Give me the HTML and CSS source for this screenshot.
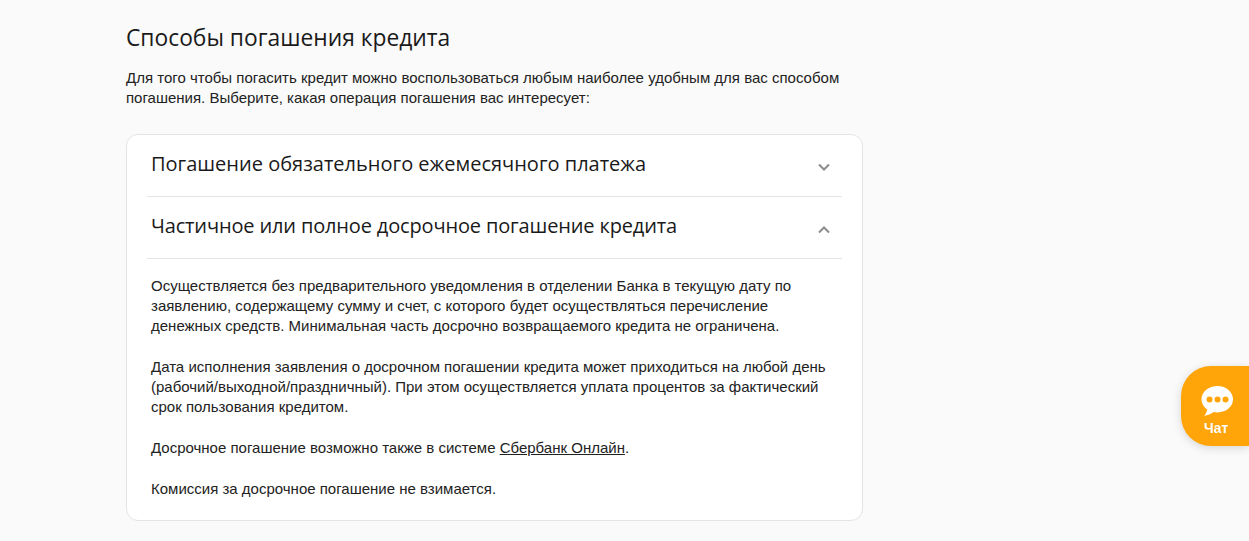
FILE: index.html
```html
<!DOCTYPE html>
<html lang="ru">
<head>
    <meta charset="UTF-8" />
    <title>Способы погашения кредита</title>
    <link rel="stylesheet" href="styles.css">
</head>
<body>
    <main class="content">
        <h1 class="title">Способы погашения кредита</h1>
        <p class="intro">Для того чтобы погасить кредит можно воспользоваться любым наиболее удобным для вас способом<br>погашения. Выберите, какая операция погашения вас интересует:</p>
        <section class="card">
            <div class="item-head">
                <h2 class="item-title">Погашение обязательного ежемесячного платежа</h2>
                <svg class="chevron" viewBox="0 0 12 8" aria-hidden="true"><path d="M1 1.5l5 5 5-5"/></svg>
            </div>
            <div class="item-head">
                <h2 class="item-title item-title-tight">Частичное или полное досрочное погашение кредита</h2>
                <svg class="chevron chevron-up" viewBox="0 0 12 8" aria-hidden="true"><path d="M1 6.5l5-5 5 5"/></svg>
            </div>
            <div class="item-body">
                <p>Осуществляется без предварительного уведомления в отделении Банка в текущую дату по<br>заявлению, содержащему сумму и счет, с которого будет осуществляться перечисление<br>денежных средств. Минимальная часть досрочно возвращаемого кредита не ограничена.</p>
                <p>Дата исполнения заявления о досрочном погашении кредита может приходиться на любой день<br>(рабочий/выходной/праздничный). При этом осуществляется уплата процентов за фактический<br>срок пользования кредитом.</p>
                <p>Досрочное погашение возможно также в системе <a href="#">Сбербанк Онлайн</a>.</p>
                <p>Комиссия за досрочное погашение не взимается.</p>
            </div>
        </section>
    </main>
    <aside class="chat">
        <svg class="chat-icon" viewBox="0 0 32 30" aria-hidden="true">
            <path class="bubble" d="M16.500 0C7.700 0 .5 5.900.5 13.300c0 4.100 2.200 7.800 5.700 10.200-.3 2-1.200 4.100-3 6.300 3.500-.3 6.900-1.900 9.500-3.700 1.200.2 2.500.3 3.800.3 8.800 0 15.500-5.800 15.500-13.100S25.300 0 16.500 0z"/>
            <circle class="dot" cx="8.500" cy="13.500" r="3"/>
            <circle class="dot" cx="16.500" cy="13.500" r="3"/>
            <circle class="dot" cx="24.500" cy="13.500" r="3"/>
        </svg>
        <span class="chat-label">Чат</span>
    </aside>
</body>
</html>
```

FILE: styles.css
```css
html, body {
    margin: 0;
    height: 100%;
    overflow: hidden;
    background: #fafafa;
}
body {
    font-family: "Liberation Sans", Arial, sans-serif;
    font-size: 15px;
    line-height: 20px;
    color: #222;
}
.content {
    width: 737px;
    margin-left: 126px;
    padding-top: 23px;
}
.title {
    margin: 0 0 15px;
    font-family: "Open Sans", sans-serif;
    font-size: 22.800px;
    line-height: 30px;
    font-weight: 400;
    color: #1a1a1a;
}
.intro {
    margin: 0 0 26px;
}
.card {
    box-sizing: border-box;
    height: 387px;
    padding: 0 20px;
    background: #fff;
    border: 1px solid #e4e4e6;
    border-radius: 12px;
}
.item-head {
    display: flex;
    justify-content: space-between;
    align-items: center;
    height: 61px;
    padding: 0 12px 0 4px;
    border-bottom: 1px solid #e4e4e6;
}
.item-title {
    margin: 0 0 3px;
    font-family: "Open Sans", sans-serif;
    font-size: 20px;
    line-height: 24px;
    font-weight: 400;
    color: #1a1a1a;
}
.item-title-tight {
    letter-spacing: -0.150px;
}
.chevron {
    width: 12px;
    height: 8px;
    margin-top: 2px;
    fill: none;
    stroke: #8b8b90;
    stroke-width: 2;
}
.chevron-up {
    margin-top: 5px;
}
.item-body {
    padding: 17px 4px 0;
}
.item-body p {
    margin: 0 0 21px;
}
.item-body a {
    color: inherit;
}
.chat {
    position: fixed;
    top: 366px;
    right: 0;
    width: 68px;
    height: 80px;
    padding-top: 10px;
    box-sizing: border-box;
    display: flex;
    flex-direction: column;
    align-items: center;
    justify-content: center;
    gap: 4px;
    background: #ffa50a;
    border-radius: 30px 0 0 30px;
    box-shadow: 0 2px 10px rgba(0, 0, 0, 0.15);
}
.chat-icon {
    width: 32px;
    height: 30px;
    margin-left: 4px;
}
.bubble {
    fill: #fff;
}
.dot {
    fill: #ffa50a;
}
.chat-label {
    margin-left: 2px;
    font-size: 14px;
    line-height: 16px;
    font-weight: 700;
    color: #fff;
}
```
